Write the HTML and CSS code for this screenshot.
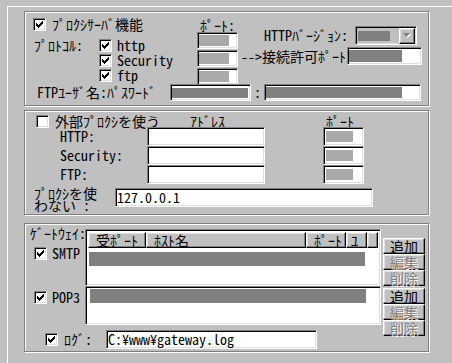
FILE: index.html
```html
<!DOCTYPE html>
<html lang="ja">
<head>
  <meta charset="UTF-8">
  <title>ﾌﾟﾛｸｼ設定</title>
  <link rel="stylesheet" href="styles.css">
</head>
<body>
  <div class="tab">

    <!-- proxy server -->
    <div class="group g1">
      <div class="g1-top">
        <div class="col-left">
          <div class="row r-proxy">
            <span class="cb"><svg width="9" height="9" viewBox="0 0 9 9"><path d="M7 1h1v1h-1zM6 2h2v1h-2zM1 3h1v1h-1zM5 3h3v1h-3zM1 4h2v1h-2zM4 4h3v1h-3zM1 5h5v1h-5zM2 6h3v1h-3zM3 7h1v1h-1z"/></svg></span>
            <span class="lbl">ﾌﾟﾛｸｼｻｰﾊﾞ機能</span>
          </div>
          <div class="row r-proto">
            <span class="proto-lbl">ﾌﾟﾛﾄｺﾙ:</span>
            <span class="cb"><svg width="9" height="9" viewBox="0 0 9 9"><path d="M7 1h1v1h-1zM6 2h2v1h-2zM1 3h1v1h-1zM5 3h3v1h-3zM1 4h2v1h-2zM4 4h3v1h-3zM1 5h5v1h-5zM2 6h3v1h-3zM3 7h1v1h-1z"/></svg></span>
            <span class="lbl-s">http</span>
          </div>
          <div class="row r-sub">
            <span class="cb"><svg width="9" height="9" viewBox="0 0 9 9"><path d="M7 1h1v1h-1zM6 2h2v1h-2zM1 3h1v1h-1zM5 3h3v1h-3zM1 4h2v1h-2zM4 4h3v1h-3zM1 5h5v1h-5zM2 6h3v1h-3zM3 7h1v1h-1z"/></svg></span>
            <span class="lbl-s">Security</span>
          </div>
          <div class="row r-sub">
            <span class="cb"><svg width="9" height="9" viewBox="0 0 9 9"><path d="M7 1h1v1h-1zM6 2h2v1h-2zM1 3h1v1h-1zM5 3h3v1h-3zM1 4h2v1h-2zM4 4h3v1h-3zM1 5h5v1h-5zM2 6h3v1h-3zM3 7h1v1h-1z"/></svg></span>
            <span class="lbl-s">ftp</span>
          </div>
        </div>
        <div class="col-mid">
          <div class="port-head">ﾎﾟｰﾄ:</div>
          <div class="edit port"><i class="sel light"></i></div>
          <div class="edit port"><i class="sel light"></i></div>
          <div class="edit port"><i class="sel light"></i></div>
        </div>
        <div class="col-right">
          <div class="row r-ver">
            <span class="ver-lbl">HTTPﾊﾞｰｼﾞｮﾝ:</span>
            <div class="combo">
              <i class="sel combo-sel"></i>
              <span class="drop"><svg width="8" height="5" viewBox="0 0 8 5"><path d="M1 1h7l-3.5 4z" fill="#fff"/><path d="M0 0h7l-3.5 4z" fill="#808080"/></svg></span>
            </div>
          </div>
          <div class="row r-allow">
            <span class="allow-lbl">--&gt;接続許可ﾎﾟｰﾄ</span>
            <div class="edit allow"><i class="sel allow-sel"></i></div>
          </div>
        </div>
      </div>
      <div class="row r-user">
        <span class="user-lbl">FTPﾕｰｻﾞ名:ﾊﾟｽﾜｰﾄﾞ</span>
        <div class="edit user"><i class="sel user-sel"></i></div>
        <span class="colon">:</span>
        <div class="edit pass"><i class="sel pass-sel"></i></div>
      </div>
    </div>

    <!-- external proxy -->
    <div class="group g2">
      <div class="row r-ext">
        <span class="cb"></span>
        <span class="ext-lbl">外部ﾌﾟﾛｸｼを使う</span>
        <span class="addr-head">ｱﾄﾞﾚｽ</span>
        <span>ﾎﾟｰﾄ</span>
      </div>
      <div class="row r-addr">
        <span class="addr-lbl">HTTP:</span>
        <div class="edit addr"></div>
        <div class="edit aport"><i class="sel light aport-sel"></i></div>
      </div>
      <div class="row r-addr">
        <span class="addr-lbl">Security:</span>
        <div class="edit addr"></div>
        <div class="edit aport"><i class="sel light aport-sel"></i></div>
      </div>
      <div class="row r-addr">
        <span class="addr-lbl">FTP:</span>
        <div class="edit addr"></div>
        <div class="edit aport"><i class="sel light aport-sel"></i></div>
      </div>
      <div class="row r-noproxy">
        <span class="noproxy-lbl">ﾌﾟﾛｸｼを使<br>わない :</span>
        <div class="edit noproxy">127.0.0.1</div>
      </div>
    </div>

    <!-- gateway -->
    <div class="group g3">
      <div class="g3-top">
        <div class="g3-left">
          <div class="gw-caption">ｹﾞｰﾄｳｪｲ:</div>
          <div class="row r-smtp">
            <span class="cb"><svg width="9" height="9" viewBox="0 0 9 9"><path d="M7 1h1v1h-1zM6 2h2v1h-2zM1 3h1v1h-1zM5 3h3v1h-3zM1 4h2v1h-2zM4 4h3v1h-3zM1 5h5v1h-5zM2 6h3v1h-3zM3 7h1v1h-1z"/></svg></span>
            <span class="lbl-s">SMTP</span>
          </div>
          <div class="row r-pop">
            <span class="cb"><svg width="9" height="9" viewBox="0 0 9 9"><path d="M7 1h1v1h-1zM6 2h2v1h-2zM1 3h1v1h-1zM5 3h3v1h-3zM1 4h2v1h-2zM4 4h3v1h-3zM1 5h5v1h-5zM2 6h3v1h-3zM3 7h1v1h-1z"/></svg></span>
            <span class="lbl-s">POP3</span>
          </div>
        </div>
        <div class="g3-lists">
          <div class="list list1">
            <div class="lv-head">
              <span class="hd hd-port">受ﾎﾟｰﾄ</span>
              <span class="hd hd-host">ﾎｽﾄ名</span>
              <span class="hd hd-rport">ﾎﾟｰﾄ</span>
              <span class="hd hd-user">ﾕ</span>
              <span class="hd hd-rest"></span>
            </div>
            <i class="sel bar1"></i>
          </div>
          <div class="list list2">
            <i class="sel bar2"></i>
          </div>
        </div>
        <div class="g3-btns">
          <div class="btn">追加</div>
          <div class="btn off">編集</div>
          <div class="btn off">削除</div>
          <div class="btn second">追加</div>
          <div class="btn off">編集</div>
          <div class="btn off">削除</div>
        </div>
      </div>
      <div class="row r-log">
        <span class="cb"><svg width="9" height="9" viewBox="0 0 9 9"><path d="M7 1h1v1h-1zM6 2h2v1h-2zM1 3h1v1h-1zM5 3h3v1h-3zM1 4h2v1h-2zM4 4h3v1h-3zM1 5h5v1h-5zM2 6h3v1h-3zM3 7h1v1h-1z"/></svg></span>
        <span class="log-lbl">ﾛｸﾞ:</span>
        <div class="edit log">C:¥www¥gateway.log</div>
      </div>
    </div>

  </div>
</body>
</html>
```

FILE: styles.css
```css
* {
  margin: 0; padding: 0; box-sizing: border-box;
}
body {
  width: 452px;
  height: 363px;
  overflow: hidden;
  background: #c0c0c0;
  color: #000;
  font-family: "Noto Sans Mono CJK JP", "Noto Sans CJK JP", monospace;
  font-size: 14px;
  line-height: 15px;
  white-space: nowrap;
}
i { display: block; }

.tab {
  margin: 6px 0 0 7px;
  height: 357px;
  border-top: 1px solid #fff;
  border-left: 1px solid #fff;
  padding: 4px 0 0 16px;
}

/* etched group frame */
.group {
  width: 405px;
  border: 1px solid #808080;
  box-shadow: inset 1px 1px #fff, 1px 1px #fff;
}
.g1 { height: 95px; }
.g2 { height: 105px; margin-top: 4px; }
.g3 { height: 129px; margin-top: 8px; }

.row {
  display: flex;
  align-items: center;
}

/* sunken 3d controls */
.cb, .edit, .combo, .list {
  border: 1px solid;
  border-color: #808080 #fff #fff #808080;
  box-shadow: inset 1px 1px #000, inset -1px -1px #dfdfdf;
  background: #fff;
}
.cb {
  display: block;
  flex: none;
  width: 13px;
  height: 13px;
  padding: 1px;
}
.cb svg { display: block; shape-rendering: crispEdges; }

.edit {
  display: flex;
  align-items: center;
  flex: none;
  padding-left: 1px;
}
.sel { background: #808080; }
.sel.light { background: #a9a9a9; }

/* raised 3d controls */
.btn, .hd, .drop {
  border: 1px solid;
  border-color: #fff #000 #000 #fff;
  box-shadow: inset -1px -1px #808080, inset 1px 1px #dfdfdf;
  background: #c0c0c0;
}

/* group 1 */
.g1-top {
  display: flex;
  height: 72px;
}
.col-left { width: 172px; }
.r-proxy {
  margin-top: 5px;
  height: 15px;
  padding-left: 8px;
}
.r-proxy .lbl { margin-left: 6px; }
.r-proto {
  margin-top: 6px;
  height: 15px;
  padding-left: 9px;
}
.proto-lbl { width: 65px; }
.r-sub {
  height: 15px;
  padding-left: 74px;
}
.lbl-s { margin-left: 5px; }

.col-mid { width: 41px; }
.port-head {
  height: 20px;
  padding: 6px 0 0 3px;
  line-height: 14px;
}
.edit.port {
  height: 17px;
  margin-bottom: 1px;
}
.port .sel { width: 30px; height: 11px; }

.r-ver {
  margin-top: 14px;
  height: 19px;
  padding-left: 26px;
}
.ver-lbl { width: 91px; }
.combo {
  display: flex;
  align-items: center;
  width: 62px;
  height: 19px;
  padding: 0 1px 0 2px;
  background: #c0c0c0;
}
.combo-sel { width: 32px; height: 10px; }
.drop {
  display: flex;
  align-items: center;
  justify-content: center;
  margin-left: auto;
  width: 16px;
  height: 16px;
}
.drop svg { display: block; }

.r-allow {
  margin-top: 2px;
  height: 18px;
  padding-left: 3px;
}
.allow-lbl { width: 106px; }
.edit.allow { width: 75px; height: 18px; }
.allow-sel { width: 53px; height: 12px; }

.r-user {
  height: 17px;
  padding-left: 12px;
}
.user-lbl { width: 133px; }
.edit.user { width: 81px; height: 17px; }
.user-sel { width: 76px; height: 10px; }
.colon { width: 13px; text-align: center; }
.edit.pass { width: 157px; height: 17px; }
.pass-sel { width: 136px; height: 11px; }

/* group 2 */
.r-ext {
  align-items: flex-start;
  height: 16px;
  padding: 4px 0 0 11px;
}
.r-ext span:not(.cb) { margin-top: -1px; }
.ext-lbl { width: 135px; margin-left: 6px; }
.addr-head { width: 136px; }
.r-addr {
  height: 19px;
  padding-left: 35px;
}
.addr-lbl { width: 87px; }
.edit.addr { width: 118px; height: 19px; }
.edit.aport { width: 41px; height: 19px; margin-left: 58px; }
.aport-sel { width: 27px; height: 11px; margin-left: 1px; }

.r-noproxy {
  align-items: flex-start;
  margin-top: 3px;
  padding-left: 9px;
}
.noproxy-lbl { width: 81px; line-height: 12px; }
.edit.noproxy {
  width: 258px;
  height: 19px;
  margin-top: 1px;
  padding-left: 1px;
}

/* group 3 */
.g3-top {
  display: flex;
  height: 101px;
}
.g3-left { width: 60px; }
.gw-caption {
  margin-top: 2px;
  padding-left: 5px;
  line-height: 14px;
}
.r-smtp, .r-pop {
  height: 13px;
  padding-left: 9px;
}
.r-smtp { margin-top: 7px; }
.r-pop { margin-top: 31px; }

.g3-lists {
  width: 296px;
  margin-top: 5px;
}
.list { padding: 2px 2px 0 2px; box-shadow: inset 1px 1px #000, inset -1px -1px #dfdfdf; }
.list1 { height: 57px; }
.list2 { height: 39px; }
.lv-head {
  display: flex;
  height: 16px;
}
.hd {
  padding-left: 7px;
  line-height: 14px;
}
.hd-port { width: 58px; }
.hd-host { width: 160px; }
.hd-rport { width: 40px; }
.hd-user { width: 21px; padding-left: 4px; }
.hd-rest { flex: 1; }
.bar1 { width: 276px; height: 14px; margin: 4px 0 0 1px; }
.bar2 { width: 276px; height: 14px; margin: 0 0 0 2px; }

.g3-btns {
  width: 42px;
  margin: 14px 0 0 2px;
}
.btn {
  height: 16px;
  line-height: 14px;
  text-align: center;
}
.btn.second { margin-top: 2px; }
.btn.off {
  color: #808080;
  text-shadow: 1px 1px #fff;
}

.r-log {
  margin-top: 5px;
  height: 19px;
  padding-left: 20px;
}
.log-lbl { width: 42px; margin-left: 6px; }
.edit.log {
  width: 211px;
  height: 19px;
}
```
